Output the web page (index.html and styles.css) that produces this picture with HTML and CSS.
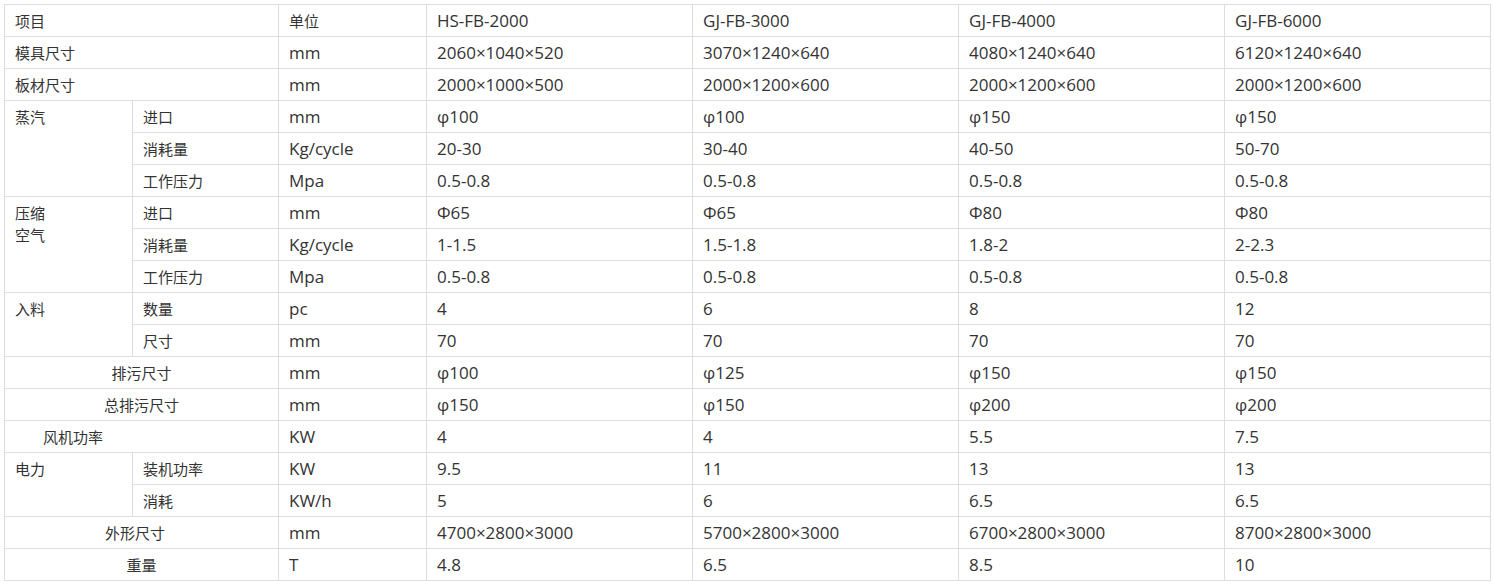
FILE: index.html
```html
<!DOCTYPE html>
<html lang="zh">
<head>
<meta charset="utf-8">
<link rel="stylesheet" href="styles.css">
</head>
<body>
<table class="spec">
<colgroup>
<col class="c1"><col class="c2"><col class="c3"><col class="c4"><col class="c4"><col class="c4"><col class="c4">
</colgroup>
<tbody>
<tr><td colspan="2" class="zh">项目</td><td class="zh">单位</td><td>HS-FB-2000</td><td>GJ-FB-3000</td><td>GJ-FB-4000</td><td>GJ-FB-6000</td></tr>
<tr><td colspan="2" class="zh">模具尺寸</td><td>mm</td><td>2060×1040×520</td><td>3070×1240×640</td><td>4080×1240×640</td><td>6120×1240×640</td></tr>
<tr><td colspan="2" class="zh">板材尺寸</td><td>mm</td><td>2000×1000×500</td><td>2000×1200×600</td><td>2000×1200×600</td><td>2000×1200×600</td></tr>
<tr><td rowspan="3" class="zh">蒸汽</td><td class="zh">进口</td><td>mm</td><td>φ100</td><td>φ100</td><td>φ150</td><td>φ150</td></tr>
<tr><td class="zh">消耗量</td><td>Kg/cycle</td><td>20-30</td><td>30-40</td><td>40-50</td><td>50-70</td></tr>
<tr><td class="zh">工作压力</td><td>Mpa</td><td>0.5-0.8</td><td>0.5-0.8</td><td>0.5-0.8</td><td>0.5-0.8</td></tr>
<tr><td rowspan="3" class="zh">压缩<br>空气</td><td class="zh">进口</td><td>mm</td><td>Φ65</td><td>Φ65</td><td>Φ80</td><td>Φ80</td></tr>
<tr><td class="zh">消耗量</td><td>Kg/cycle</td><td>1-1.5</td><td>1.5-1.8</td><td>1.8-2</td><td>2-2.3</td></tr>
<tr><td class="zh">工作压力</td><td>Mpa</td><td>0.5-0.8</td><td>0.5-0.8</td><td>0.5-0.8</td><td>0.5-0.8</td></tr>
<tr><td rowspan="2" class="zh">入料</td><td class="zh">数量</td><td>pc</td><td>4</td><td>6</td><td>8</td><td>12</td></tr>
<tr><td class="zh">尺寸</td><td>mm</td><td>70</td><td>70</td><td>70</td><td>70</td></tr>
<tr><td colspan="2" class="zh center">排污尺寸</td><td>mm</td><td>φ100</td><td>φ125</td><td>φ150</td><td>φ150</td></tr>
<tr><td colspan="2" class="zh center">总排污尺寸</td><td>mm</td><td>φ150</td><td>φ150</td><td>φ200</td><td>φ200</td></tr>
<tr><td colspan="2" class="zh indent">风机功率</td><td>KW</td><td>4</td><td>4</td><td>5.5</td><td>7.5</td></tr>
<tr><td rowspan="2" class="zh">电力</td><td class="zh">装机功率</td><td>KW</td><td>9.5</td><td>11</td><td>13</td><td>13</td></tr>
<tr><td class="zh">消耗</td><td>KW/h</td><td>5</td><td>6</td><td>6.5</td><td>6.5</td></tr>
<tr><td colspan="2" class="zh center shift">外形尺寸</td><td>mm</td><td>4700×2800×3000</td><td>5700×2800×3000</td><td>6700×2800×3000</td><td>8700×2800×3000</td></tr>
<tr><td colspan="2" class="zh center">重量</td><td>T</td><td>4.8</td><td>6.5</td><td>8.5</td><td>10</td></tr>
</tbody>
</table>
</body>
</html>
```

FILE: styles.css
```css
html, body {
  margin: 0;
  padding: 0;
  background: #fff;
}
body {
  padding: 4px;
  font-family: "Open Sans", "Noto Sans CJK SC", sans-serif;
  font-size: 17px;
  color: #333;
}
.spec {
  border-collapse: collapse;
  table-layout: fixed;
  width: 1487px;
}
.c1 { width: 128px; }
.c2 { width: 146px; }
.c3 { width: 148px; }
.c4 { width: 266px; }
.spec td {
  border: 1px solid #ddd;
  height: 32px;
  box-sizing: border-box;
  padding: 5px 10px 0 10px;
  vertical-align: top;
  line-height: 22px;
  white-space: nowrap;
}
.spec td.zh {
  font-size: 15px;
  padding-top: 5px;
}
.spec td.center { text-align: center; }
.spec td.shift { padding-right: 23px; }
.spec td.indent { padding-left: 38px; }
```
